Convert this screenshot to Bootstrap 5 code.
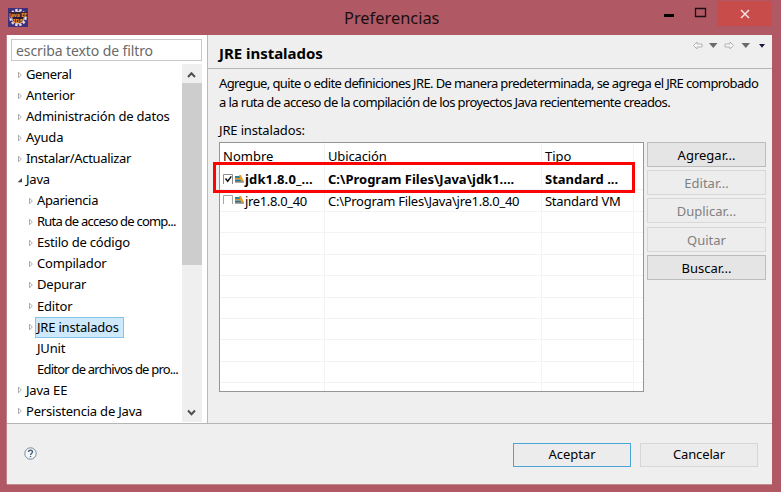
<!DOCTYPE html>
<html lang="es">
<head>
<meta charset="utf-8">
<meta name="viewport" content="width=device-width, initial-scale=1">
<title>Preferencias</title>
<link href="https://cdn.jsdelivr.net/npm/bootstrap@5.3.0/dist/css/bootstrap.min.css" rel="stylesheet">
<style>
body{font:13px/21px "Noto Sans","Open Sans",sans-serif;color:#000;background:#b05964;overflow:hidden}
.window{width:781px;height:492px;padding:0 9px 8px 7px}
.titlebar{height:35px}
.app-icon{width:20px;height:20px;margin:7px 0 0 1px}
.caption{font-size:16.4px;line-height:36px;margin-left:316px;color:#1b0f11}
.win-ctl{margin-top:1px;height:25px}
.win-ctl .close-box{width:55px;height:25px;background:#c74c4a}
.client{height:449px;background:#efefef;box-shadow:0 1px 0 #c48a92,-1px 0 0 #c0808a}
.upper{height:389px;border-bottom:1px solid #b5b5b5}
.side{width:200px;padding:4px 0 0 4px}
.filter{width:191px;height:22px;border:1px solid #c8c8c8;border-radius:0;padding:1px 5px 0 4px;font-size:14px;line-height:20px;letter-spacing:-.1px}
.filter::placeholder{color:#6a6a6a}
.side-body{width:191px;margin-top:3px;height:358px}
.tree{width:171px;overflow:hidden}
.tree li{height:21.05px;padding-left:6px;white-space:nowrap;display:flex;align-items:center;letter-spacing:-.2px}
.tree .child{padding-left:17px}
.tree svg{width:6px;height:8px;flex:none}
.tree span{padding-left:3px;height:21px}
.tree .leaf{padding-left:23px}
.tree .picked{background:#cde9fb;box-shadow:inset 0 0 0 1px #86c5e8;margin-left:1px;padding:0 5px 0 2px;letter-spacing:-.2px}
.ls-3{letter-spacing:-.35px!important}
.ls-7{letter-spacing:-.78px!important}
.ls-6{letter-spacing:-.612px}
.ls-2{letter-spacing:-.28px}
.ls-1{letter-spacing:-.15px}
.scroller{width:20px;background:#efefef}
.scroller svg{width:20px;height:19px;display:block}
.thumb{height:182px;background:#cdcdcd}
.page-pane{width:565px;border-left:1px solid #b9b9b9}
.heading{height:34px;border-bottom:1px solid #b5b5b5;padding:0 3px 0 11px}
.heading h1{font-size:15px;line-height:37px;margin:0;font-weight:700;letter-spacing:-.03px}
.intro{line-height:19px;padding:5px 0 0 11px;margin:0;white-space:nowrap}
.list-label{padding:9px 0 0 11px;height:30px;line-height:19px}
.list-row{padding-left:11px}
.grid-box{width:425px;height:250px;background:#fff;border:1px solid #969696}
.cells{display:grid;grid-template-columns:105px 217px 92px 9px;grid-template-rows:26px 21px 22px;grid-auto-rows:21.4px;height:248px;overflow:hidden}
.cells>div{border-right:1px solid #f3f3f3;border-bottom:1px solid #f3f3f3;white-space:nowrap;padding-left:3px;line-height:22px}
.cells>div:nth-child(4n){border-right:0}
.cells .hd{border-bottom:0;line-height:26px}
.cells .bold-row{font-weight:700;line-height:21px}
.cells svg{flex:none}
.jdk{padding-left:1px;letter-spacing:.15px}
.jre{padding-left:1px}
.highlight{left:-7px;top:19px;width:422px;height:31px;border:3px solid #fb0404}
.actions{width:119px;gap:3.2px;margin-left:3px}
.wbtn{height:25px;line-height:24px;padding:0;font-size:13px;color:#000;border:1px solid #bcbcbc;background:#e5e5e5;border-radius:0}
.wbtn.off{color:#808080;border-color:#d8d8d8;background:#ededed}
.footer-bar{height:60px;padding:19px 14px 0 17px}
.footer-bar .wbtn{width:118px;height:24px;padding-bottom:2px;line-height:20px;background:#ececec;border-color:#d6d6d6}
.footer-bar .wbtn.primary{border-color:#4ba6d8;margin-right:9px}
</style>
</head>
<body>
<svg class="d-none">
  <symbol id="closed" viewBox="0 0 6 8"><path d="M1.500 1.200 4.300 4 1.500 6.800z" fill="#fff" stroke="#a3a3a3" stroke-width=".9"/></symbol>
  <symbol id="opened" viewBox="0 0 6 8"><path d="M5 2v4.300H.6z" fill="#454545"/></symbol>
</svg>
<div class="window">
  <header class="titlebar d-flex align-items-start">
    <svg class="app-icon" viewBox="0 0 20 20"><path fill="#40307a" d="M0 1h20v19H0z"/><circle cx="10" cy="10.500" r="7.600" fill="none" stroke="#e5e2e8" stroke-width="2.200" stroke-dasharray="2.400 1.700"/><circle cx="10" cy="10.500" r="6.200" fill="#2b1b2b" stroke="#d8d5da"/><path d="M1 5h18v5H1z" fill="#3a2430"/><text x="10" y="9.600" text-anchor="middle" font-size="5.500" font-weight="700" fill="#ff942e" textLength="18" lengthAdjust="spacingAndGlyphs">Java EE</text><text x="10" y="15.800" text-anchor="middle" font-size="5.500" font-weight="700" fill="#ff942e" textLength="10" lengthAdjust="spacingAndGlyphs">IDE</text></svg>
    <div class="caption">Preferencias</div>
    <div class="win-ctl d-flex ms-auto">
      <svg width="65" height="25" viewBox="0 0 65 25"><path d="M12 13h10v3H12z"/><path d="M43.500 7.500h10v8h-10z" fill="none" stroke="#1b0f11" stroke-width="1.300"/></svg>
      <div class="close-box d-flex align-items-center justify-content-center"><svg width="10" height="10" viewBox="0 0 10 10"><path d="m1 1 8 8M9 1 1 9" stroke="#f6e4e4" stroke-width="1.500"/></svg></div>
    </div>
  </header>
  <main class="client">
    <div class="upper d-flex">
      <aside class="side bg-white">
        <input class="form-control filter" placeholder="escriba texto de filtro" aria-label="Filtro">
        <div class="side-body d-flex">
          <ul class="tree list-unstyled mb-0">
            <li><svg><use href="#closed"/></svg><span class="ls-3">General</span></li>
            <li><svg><use href="#closed"/></svg><span>Anterior</span></li>
            <li><svg><use href="#closed"/></svg><span>Administración de datos</span></li>
            <li><svg><use href="#closed"/></svg><span>Ayuda</span></li>
            <li><svg><use href="#closed"/></svg><span class="ls-3">Instalar/Actualizar</span></li>
            <li><svg><use href="#opened"/></svg><span>Java</span></li>
            <li class="child"><svg><use href="#closed"/></svg><span class="ls-3">Apariencia</span></li>
            <li class="child"><svg><use href="#closed"/></svg><span class="ls-7">Ruta de acceso de comp...</span></li>
            <li class="child"><svg><use href="#closed"/></svg><span>Estilo de código</span></li>
            <li class="child"><svg><use href="#closed"/></svg><span>Compilador</span></li>
            <li class="child"><svg><use href="#closed"/></svg><span>Depurar</span></li>
            <li class="child"><svg><use href="#closed"/></svg><span>Editor</span></li>
            <li class="child"><svg><use href="#closed"/></svg><span class="picked">JRE instalados</span></li>
            <li class="leaf"><span>JUnit</span></li>
            <li class="leaf"><span class="ls-7">Editor de archivos de pro...</span></li>
            <li><svg><use href="#closed"/></svg><span>Java EE</span></li>
            <li><svg><use href="#closed"/></svg><span>Persistencia de Java</span></li>
          </ul>
          <div class="scroller d-flex flex-column">
            <svg viewBox="0 0 20 19"><path d="m6 13 3.500-3.700L13 13" fill="none" stroke="#505050" stroke-width="2"/></svg>
            <div class="thumb"></div>
            <svg class="mt-auto" viewBox="0 0 20 19"><path d="m6 7.500 3.500 3.700L13 7.500" fill="none" stroke="#505050" stroke-width="2"/></svg>
          </div>
        </div>
      </aside>
      <section class="page-pane">
        <div class="heading d-flex justify-content-between">
          <h1>JRE instalados</h1>
          <svg width="78" height="20" viewBox="0 0 78 20"><path d="M2.500 10.500 6 7v2h5v3H6v2zM42.500 10.500 39 7v2h-5v3h5v2z" fill="#f8f8f8" stroke="#b3b3b3"/><path d="M18 8h8.500l-4.200 5zM50.500 8H59l-4.200 5z" fill="#686b6b"/><path d="M68 9h6l-3 3.700z" fill="#20123f"/></svg>
        </div>
        <p class="intro ls-6">Agregue, quite o edite definiciones JRE. De manera predeterminada, se agrega el JRE comprobado<br>a la ruta de acceso de la compilación de los proyectos Java recientemente creados.</p>
        <div class="list-label ls-1">JRE instalados:</div>
        <div class="d-flex list-row">
          <div class="grid-box position-relative">
            <div class="cells">
              <div class="hd">Nombre</div><div class="hd ls-1">Ubicación</div><div class="hd">Tipo</div><div class="hd"></div>
              <div class="bold-row d-flex"><svg width="21" height="20" viewBox="0 0 21 20"><path d="M.5 15V5.500h9V15" fill="#fff" stroke="#8c8c8c"/><path d="m2.500 9.500 2.200 2.700L8.300 7.400" fill="none" stroke="#111" stroke-width="1.500"/><path d="M12 7h6v2h-6z" fill="#2f8792"/><path d="M12 9h6v1.500h-6z" fill="#e58f2b"/><path d="M12 10.500h6v2h-6z" fill="#28718f"/><path d="M16 6h2l3 6.500h-3z" fill="#e5a02b"/><path d="M12 13h9" stroke="#5c5443"/></svg><span class="jdk">jdk1.8.0_...</span></div><div class="bold-row">C:\Program Files\Java\jdk1....</div><div class="bold-row">Standard ...</div><div></div>
              <div class="d-flex"><svg width="21" height="20" viewBox="0 0 21 20"><path d="M.5 14V5.500h9V14" fill="#fff" stroke="#a5a5a5"/><path d="M12 7h6v2h-6z" fill="#2f8792"/><path d="M12 9h6v1.500h-6z" fill="#e58f2b"/><path d="M12 10.500h6v2h-6z" fill="#28718f"/><path d="M16 6h2l3 6.500h-3z" fill="#e5a02b"/><path d="M12 13h9" stroke="#5c5443"/></svg><span class="jre ls-3">jre1.8.0_40</span></div><div class="ls-2">C:\Program Files\Java\jre1.8.0_40</div><div class="ls-2">Standard VM</div><div></div>
              <div></div><div></div><div></div><div></div>
              <div></div><div></div><div></div><div></div>
              <div></div><div></div><div></div><div></div>
              <div></div><div></div><div></div><div></div>
              <div></div><div></div><div></div><div></div>
              <div></div><div></div><div></div><div></div>
              <div></div><div></div><div></div><div></div>
              <div></div><div></div><div></div><div></div>
              <div></div><div></div><div></div><div></div>
            </div>
            <div class="highlight position-absolute"></div>
          </div>
          <div class="actions d-flex flex-column">
            <button class="btn wbtn">Agregar...</button>
            <button class="btn wbtn off">Editar...</button>
            <button class="btn wbtn off">Duplicar...</button>
            <button class="btn wbtn off">Quitar</button>
            <button class="btn wbtn">Buscar...</button>
          </div>
        </div>
      </section>
    </div>
    <footer class="footer-bar d-flex align-items-start">
      <svg class="mt-1" width="13" height="13" viewBox="0 0 13 13"><circle cx="6.500" cy="6.500" r="5.700" fill="#f6f8fa" stroke="#75899c"/><path d="M4.500 5C4.500 2.600 8.500 2.600 8.500 4.900 8.500 6.200 6.500 6.300 6.500 8" fill="none" stroke="#4b6279" stroke-width="1.400"/><path d="M5.800 8.900h1.400v1.300H5.800z" fill="#4b6279"/></svg>
      <button class="btn wbtn primary ms-auto">Aceptar</button>
      <button class="btn wbtn ls-1">Cancelar</button>
    </footer>
  </main>
</div>
<script src="https://cdn.jsdelivr.net/npm/bootstrap@5.3.0/dist/js/bootstrap.bundle.min.js"></script>
</body>
</html>
